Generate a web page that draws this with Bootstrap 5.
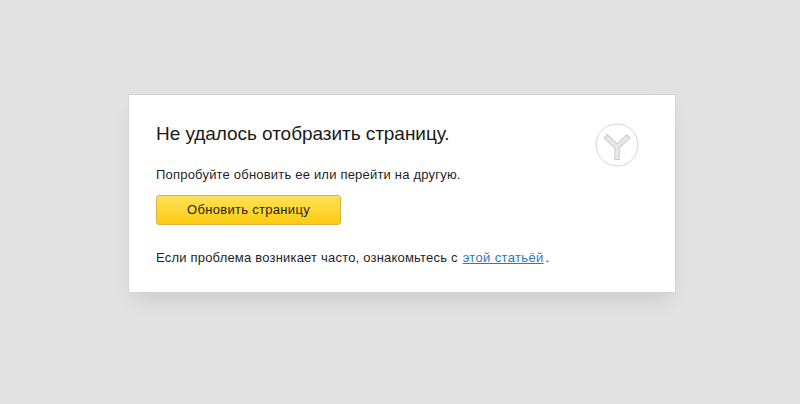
<!DOCTYPE html>
<html lang="ru">
<head>
    <meta charset="UTF-8">
    <meta name="viewport" content="width=device-width, initial-scale=1">
    <title>Не удалось отобразить страницу</title>
    <link rel="stylesheet" href="https://cdn.jsdelivr.net/npm/bootstrap@5.3.0/dist/css/bootstrap.min.css">
    <style>
        html, body { height: 100%; }
        body {
            background: #e2e2e2;
            color: #1f1f1f;
            font-family: "Liberation Sans", Arial, sans-serif;
            font-size: 13px;
            overflow: hidden;
        }
        .err-page { height: 404px; padding-top: 94px; padding-left: 128px; }
        .err-box {
            width: 548px;
            height: 199px;
            background: #fff;
            border: 1px solid #d4d4d4;
            box-shadow: 0 12px 20px -6px rgba(0, 0, 0, .1);
            padding: 28px 36px 0 27px;
        }
        .err-title { font-size: 19px; letter-spacing: -.05px; line-height: 22px; font-weight: 400; margin: 0 0 22px; color: #1a1a1a; }
        .err-text { line-height: 16px; letter-spacing: .2px; margin: 0 0 12px; }
        .err-btn {
            width: 185px;
            height: 30px;
            padding: 0;
            font-size: 13px;
            letter-spacing: .3px;
            line-height: 28px;
            color: #2a2416;
            background: linear-gradient(#ffe25a, #fccb0f);
            border: 1px solid #d9b44a;
            border-radius: 3px;
            margin-bottom: 25px;
            display: block;
        }
        .err-btn:hover { color: #2a2416; background: linear-gradient(#ffe25a, #fccb0f); border-color: #d9b44a; }
        .err-link { color: #2f78bd; text-decoration: underline; letter-spacing: .35px; margin: 0 2px 0 5px; }
        .err-logo { width: 44px; height: 44px; }
    </style>
</head>
<body>
    <div class="err-page">
        <div class="err-box d-flex justify-content-between align-items-start">
            <div>
                <h1 class="err-title">Не удалось отобразить страницу.</h1>
                <p class="err-text">Попробуйте обновить ее или перейти на другую.</p>
                <button type="button" class="btn err-btn">Обновить страницу</button>
                <p class="err-text mb-0">Если проблема возникает часто, ознакомьтесь с<a class="err-link" href="#">этой статьёй</a>.</p>
            </div>
            <svg class="err-logo" viewBox="0 0 44 44" aria-hidden="true">
                <circle cx="22" cy="22" r="21" fill="#fff" stroke="#d6d6d6" stroke-width="1"/>
                <path d="M22 37V24L10.5 13M22 24L33.5 13" fill="none" stroke="#cbcbcb" stroke-width="5.5"/>
                <path d="M22 36V24L11.5 14M22 24L32.5 14" fill="none" stroke="#e8e8e8" stroke-width="3.5"/>
            </svg>
        </div>
    </div>
    <script src="https://cdn.jsdelivr.net/npm/bootstrap@5.3.0/dist/js/bootstrap.bundle.min.js"></script>
</body>
</html>
